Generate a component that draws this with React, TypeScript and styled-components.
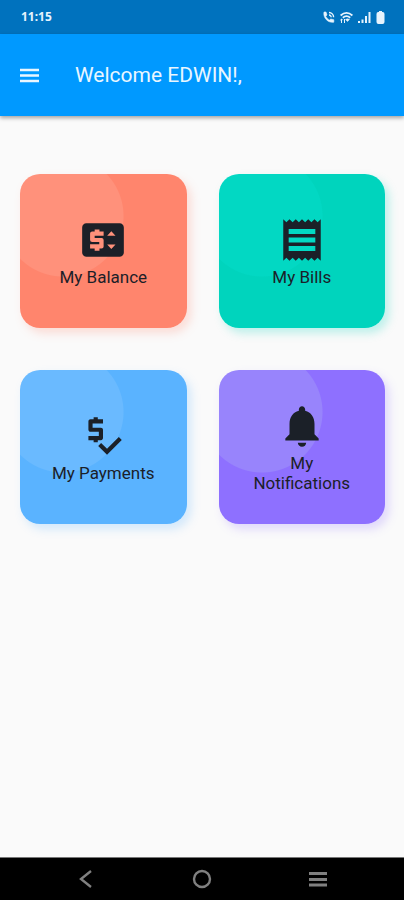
import React from "react";
import styled, { createGlobalStyle } from "styled-components";
import { MdNotifications, MdPriceCheck } from "react-icons/md";

const GlobalStyle = createGlobalStyle`
  *, *::before, *::after { box-sizing: border-box; }
  body { margin: 0; background: #fafafa; font-family: Roboto, sans-serif; }
  button { font: inherit; border: 0; padding: 0; background: none; cursor: pointer; }
`;

const Screen = styled.div`
  display: flex;
  flex-direction: column;
  min-height: 100vh;
  background: #fafafa;
`;

const StatusBar = styled.div`
  display: flex;
  align-items: center;
  justify-content: space-between;
  height: 34px;
  padding: 0 19px 0 21px;
  background: #0072be;
  color: #e6f3fd;
`;

const Clock = styled.time`
  font: 700 12px/16px "Noto Sans", sans-serif;
`;

const StatusIcons = styled.div`
  display: flex;
  align-items: center;
  gap: 5px;
`;

const AppBar = styled.header`
  display: flex;
  align-items: center;
  gap: 33px;
  height: 82px;
  padding: 0 17px;
  background: #0099ff;
  color: #e9f6ff;
  box-shadow: 0 2px 4px rgba(0, 0, 0, 0.35);
`;

const MenuButton = styled.button`
  display: flex;
  color: inherit;
`;

const Title = styled.h1`
  margin: 0;
  font-size: 21px;
  line-height: 28px;
  font-weight: 400;
`;

const Grid = styled.main`
  flex: 1;
  display: grid;
  grid-template-columns: 1fr 1fr;
  align-content: start;
  gap: 42px 32px;
  padding: 58px 19px 40px 20px;
`;

const Tile = styled.button<{ $color: string; $light: string; $glow: string }>`
  display: flex;
  flex-direction: column;
  align-items: center;
  justify-content: center;
  gap: 2px;
  height: 154px;
  padding: 0 24px;
  border-radius: 20px;
  color: #1b2028;
  background: radial-gradient(circle at 43px 42px, ${(p) => p.$light} 60px, ${(p) => p.$color} 61px);
  box-shadow: 4px 5px 10px ${(p) => p.$glow};
`;

const TileLabel = styled.span`
  font-size: 17px;
  line-height: 20px;
  text-align: center;
`;

const NavBar = styled.nav`
  display: flex;
  align-items: center;
  justify-content: space-around;
  height: 43px;
  padding: 0 28px;
  border-top: 1px solid #777;
  background: #000;
`;

const NavButton = styled.button`
  display: flex;
  justify-content: center;
  width: 48px;
  color: #808080;
`;

type IconProps = { size: number };

const MenuIcon = ({ size }: IconProps) => (
  <svg width={size} height={size} viewBox="0 0 25 25" fill="none" stroke="currentColor" strokeWidth="2.600" aria-hidden="true">
    <path d="M3 7h19M3 12.500h19M3 18h19" />
  </svg>
);

const BalanceIcon = ({ size }: IconProps) => (
  <svg width={size} height={size} viewBox="0 0 24 24" fill="currentColor" aria-hidden="true">
    <path
      fillRule="evenodd"
      d="M20 4H4c-1.100 0-2 .9-2 2v12c0 1.100.9 2 2 2h16c1.100 0 2-.9 2-2V6c0-1.100-.9-2-2-2zM12.300 10H8v1h3.300q1 0 1 1v3.100q0 1-1 1h-1v1H8v-1H5.800V14H10.200v-1H6.800q-1 0-1-1V8.900q0-1 1-1H8v-1h2.300v1h2zM18 14.200 16 16.300 14 14.200zM14 9.900l2-2.100L18 9.900z"
    />
  </svg>
);

const BillsIcon = ({ size }: IconProps) => (
  <svg width={size} height={size} viewBox="0 0 24 24" fill="currentColor" aria-hidden="true">
    <path
      fillRule="evenodd"
      d="M3 22l1.500-1.500L6 22l1.500-1.500L9 22l1.500-1.500L12 22l1.500-1.500L15 22l1.500-1.500L18 22l1.500-1.500L21 22V2l-1.500 1.500L18 2l-1.500 1.500L15 2l-1.500 1.500L12 2l-1.500 1.500L9 2 7.500 3.500 6 2 4.500 3.500 3 2zM5.600 6.700h12.800v2.400H5.600zM5.600 10.800h12.800v2.400H5.600zM5.600 14.900h12.800v2.400H5.600z"
    />
  </svg>
);

type TileData = {
  label: string;
  icon: React.ComponentType<IconProps>;
  color: string;
  light: string;
  glow: string;
};

const tiles: TileData[] = [
  { label: "My Balance", icon: BalanceIcon, color: "#ff856d", light: "#ff917b", glow: "rgba(255, 133, 109, 0.25)" },
  { label: "My Bills", icon: BillsIcon, color: "#00d4bd", light: "#02d8c3", glow: "rgba(0, 212, 189, 0.25)" },
  { label: "My Payments", icon: MdPriceCheck, color: "#5ab3ff", light: "#6abaff", glow: "rgba(90, 179, 255, 0.25)" },
  { label: "My Notifications", icon: MdNotifications, color: "#8e70ff", light: "#9884fc", glow: "rgba(142, 112, 255, 0.25)" },
];

const CallIcon = () => (
  <svg width="13" height="13" viewBox="0 0 13 13" fill="none" stroke="currentColor" aria-hidden="true">
    <path
      d="M2 1h2l1 3-1.300 1.200c.8 1.700 2.100 3 3.800 3.900L8.800 8l3 .7v2.500c-5.800 1-11-4.500-9.800-10.200z"
      fill="currentColor"
      strokeWidth="0.600"
    />
    <path d="M7 1.500a4.600 4.600 0 0 1 4.600 4.700M7 4a2.200 2.200 0 0 1 2.200 2.200" strokeWidth="1.400" />
  </svg>
);

const WifiIcon = () => (
  <svg width="13" height="13" viewBox="0 0 13 13" fill="none" stroke="currentColor" aria-hidden="true">
    <path d="M.6 4.500Q6.500-.8 12.400 4.500M2.800 6.700q3.700-3.200 7.400 0" strokeWidth="1.800" />
    <path d="M5.500 8.500q2-1.400 4 0l-2 2z" fill="currentColor" strokeWidth="0.500" />
    <path d="M1.500 12V8M.3 9.200 1.500 8l1.200 1.200M4.500 8v4" strokeWidth="1" />
  </svg>
);

const SignalIcon = () => (
  <svg width="13" height="13" viewBox="0 0 13 13" fill="currentColor" aria-hidden="true">
    <path d="M0 10h2v2H0zM3.500 8.500h2V12h-2zM7 5h2v7H7zM10.500 1h2v11h-2z" />
  </svg>
);

const BatteryIcon = () => (
  <svg width="9" height="13" viewBox="0 0 9 13" fill="currentColor" aria-hidden="true">
    <path d="M3 0h3v1h.7Q8.500 1 8.500 3v8q0 2-2 2h-4q-2 0-2-2V3q0-2 1.800-2H3z" />
  </svg>
);

export default function App() {
  return (
    <Screen>
      <GlobalStyle />
      <StatusBar>
        <Clock>11:15</Clock>
        <StatusIcons>
          <CallIcon />
          <WifiIcon />
          <SignalIcon />
          <BatteryIcon />
        </StatusIcons>
      </StatusBar>
      <AppBar>
        <MenuButton aria-label="Open menu">
          <MenuIcon size={25} />
        </MenuButton>
        <Title>Welcome EDWIN!,</Title>
      </AppBar>
      <Grid>
        {tiles.map(({ label, icon: Icon, color, light, glow }) => (
          <Tile key={label} $color={color} $light={light} $glow={glow}>
            <Icon size={50} />
            <TileLabel>{label}</TileLabel>
          </Tile>
        ))}
      </Grid>
      <NavBar aria-label="System navigation">
        <NavButton aria-label="Back">
          <svg width="20" height="20" viewBox="0 0 20 20" fill="none" stroke="currentColor" strokeWidth="2.400">
            <path d="M15 2 5 10l10 8" />
          </svg>
        </NavButton>
        <NavButton aria-label="Home">
          <svg width="20" height="20" viewBox="0 0 20 20" fill="none" stroke="currentColor" strokeWidth="2.400">
            <circle cx="10" cy="10" r="8" />
          </svg>
        </NavButton>
        <NavButton aria-label="Recent apps">
          <svg width="20" height="20" viewBox="0 0 20 20" fill="none" stroke="currentColor" strokeWidth="3">
            <path d="M1 4.500h18M1 10.500h18M1 16h18" />
          </svg>
        </NavButton>
      </NavBar>
    </Screen>
  );
}
